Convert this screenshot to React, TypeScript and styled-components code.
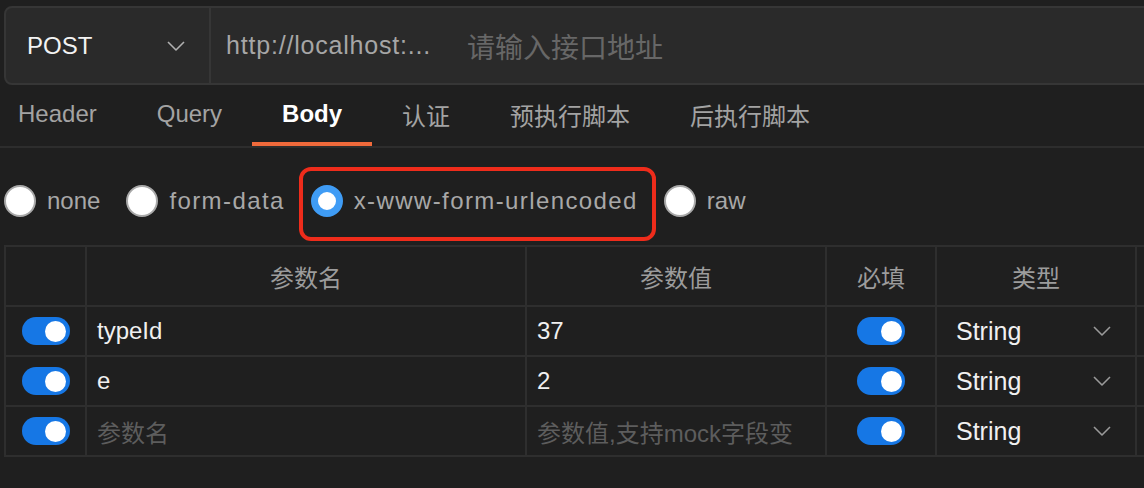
import { Fragment } from "react";
import styled, { createGlobalStyle } from "styled-components";

const GlobalStyle = createGlobalStyle`
  html, body {
    margin: 0;
    padding: 0;
    background: #1f1f1f;
  }
  body {
    font-family: "Liberation Sans", "Noto Sans CJK SC", sans-serif;
    overflow: hidden;
  }
`;

const Page = styled.div`
  width: 1144px;
  height: 488px;
  overflow: hidden;
  background: #1f1f1f;
`;

const UrlBar = styled.div`
  display: flex;
  align-items: stretch;
  height: 79px;
  margin: 6px -40px 0 4px;
  box-sizing: border-box;
  background: #2a2a2a;
  border: 2px solid #363636;
  border-radius: 8px;
`;

const MethodSelect = styled.div`
  display: flex;
  align-items: center;
  justify-content: space-between;
  width: 205px;
  box-sizing: border-box;
  padding: 0 24px 0 21px;
  border-right: 2px solid #363636;
  font-size: 24px;
  color: #f2f2f2;
`;

const UrlField = styled.div`
  display: flex;
  align-items: center;
  padding-left: 15px;
`;

const UrlText = styled.span`
  font-size: 25px;
  letter-spacing: 0.8px;
  color: #a6a6a6;
`;

const UrlPlaceholder = styled.span`
  margin-left: 36px;
  font-size: 28px;
  color: #676767;
`;

const TabBar = styled.div`
  display: flex;
  height: 63px;
  margin-left: -12px;
  box-sizing: border-box;
  border-bottom: 2px solid #2d2d2d;
`;

const Tab = styled.div<{ $active?: boolean }>`
  position: relative;
  display: flex;
  align-items: center;
  padding: 0 30px 3px;
  font-size: 24px;
  font-weight: ${(p) => (p.$active ? 700 : 400)};
  color: ${(p) => (p.$active ? "#ffffff" : "#a3a3a3")};

  &::after {
    content: "";
    display: ${(p) => (p.$active ? "block" : "none")};
    position: absolute;
    left: 0;
    right: 0;
    bottom: 0;
    height: 4px;
    background: #f06a3b;
  }
`;

const RadioRow = styled.div`
  display: flex;
  align-items: center;
  gap: 26px;
  height: 97px;
  box-sizing: border-box;
  padding: 8px 0 0 4px;
`;

const RadioItem = styled.label<{ $marked?: boolean }>`
  position: relative;
  display: flex;
  align-items: center;
  gap: 11px;

  &::after {
    content: "";
    display: ${(p) => (p.$marked ? "block" : "none")};
    position: absolute;
    top: -18px;
    bottom: -24px;
    left: -12px;
    right: -18px;
    border: 4px solid #ee2c1b;
    border-radius: 12px;
  }
`;

const RadioDot = styled.span<{ $checked?: boolean }>`
  width: 32px;
  height: 32px;
  box-sizing: border-box;
  border-radius: 50%;
  background: #ffffff;
  border: ${(p) => (p.$checked ? "7px solid #3f9cf5" : "2px solid #a9a9a9")};
`;

const RadioLabel = styled.span<{ $spacing?: number }>`
  font-size: 24px;
  color: #a8a8a8;
  letter-spacing: ${(p) => p.$spacing ?? 0}px;
`;

const Table = styled.div`
  display: grid;
  grid-template-columns: 81px 440px 300px 110px 200px 80px;
  grid-template-rows: 60px;
  grid-auto-rows: 50px;
  margin-left: 4px;
  border-left: 2px solid #2e2e2e;
  border-top: 2px solid #2e2e2e;
`;

const Cell = styled.div<{ $center?: boolean; $head?: boolean }>`
  display: flex;
  align-items: center;
  justify-content: ${(p) => (p.$center ? "center" : "flex-start")};
  min-width: 0;
  box-sizing: border-box;
  padding: ${(p) => (p.$center ? "0" : "0 10px")};
  border-right: 2px solid #2e2e2e;
  border-bottom: 2px solid #2e2e2e;
  font-size: 24px;
  color: ${(p) => (p.$head ? "#9c9c9c" : "#f0f0f0")};
  white-space: nowrap;
`;

const CellText = styled.span<{ $hint?: boolean }>`
  color: ${(p) => (p.$hint ? "#5d5d5d" : "inherit")};
`;

const TypeSelect = styled(Cell)`
  justify-content: space-between;
  padding: 0 24px 0 19px;
  font-size: 25px;
`;

const Toggle = styled.span`
  display: flex;
  align-items: center;
  justify-content: flex-end;
  width: 48px;
  height: 28px;
  box-sizing: border-box;
  padding-right: 3.5px;
  border-radius: 14px;
  background: #1677e5;
`;

const Knob = styled.span`
  width: 21px;
  height: 21px;
  border-radius: 50%;
  background: #ffffff;
`;

function Chevron({ color = "#a0a0a0" }: { color?: string }) {
  return (
    <svg width="18" height="10" viewBox="0 0 18 10" fill="none">
      <polyline points="1,1 9,9 17,1" stroke={color} strokeWidth="1.6" strokeLinejoin="round" />
    </svg>
  );
}

function Switch() {
  return (
    <Toggle>
      <Knob />
    </Toggle>
  );
}

const tabs = ["Header", "Query", "Body", "认证", "预执行脚本", "后执行脚本"];

const bodyTypes = [
  { label: "none", spacing: 0 },
  { label: "form-data", spacing: 1.4 },
  { label: "x-www-form-urlencoded", spacing: 1.4, checked: true },
  { label: "raw", spacing: 0 },
];

const params = [
  { name: "typeId", value: "37" },
  { name: "e", value: "2" },
  { name: "", value: "" },
];

export default function App() {
  return (
    <Page>
      <GlobalStyle />
      <UrlBar>
        <MethodSelect>
          POST
          <Chevron color="#b0b0b0" />
        </MethodSelect>
        <UrlField>
          <UrlText>http://localhost:...</UrlText>
          <UrlPlaceholder>请输入接口地址</UrlPlaceholder>
        </UrlField>
      </UrlBar>

      <TabBar>
        {tabs.map((t) => (
          <Tab key={t} $active={t === "Body"}>
            {t}
          </Tab>
        ))}
      </TabBar>

      <RadioRow>
        {bodyTypes.map((b) => (
          <RadioItem key={b.label} $marked={b.checked}>
            <RadioDot $checked={b.checked} />
            <RadioLabel $spacing={b.spacing}>{b.label}</RadioLabel>
          </RadioItem>
        ))}
      </RadioRow>

      <Table>
        <Cell $head $center />
        <Cell $head $center>参数名</Cell>
        <Cell $head $center>参数值</Cell>
        <Cell $head $center>必填</Cell>
        <Cell $head $center>类型</Cell>
        <Cell $head $center />

        {params.map((p, i) => (
          <Fragment key={i}>
            <Cell $center>
              <Switch />
            </Cell>
            <Cell>
              <CellText $hint={!p.name}>{p.name || "参数名"}</CellText>
            </Cell>
            <Cell>
              <CellText $hint={!p.value}>{p.value || "参数值,支持mock字段变"}</CellText>
            </Cell>
            <Cell $center>
              <Switch />
            </Cell>
            <TypeSelect>
              String
              <Chevron color="#9a9a9a" />
            </TypeSelect>
            <Cell />
          </Fragment>
        ))}
      </Table>
    </Page>
  );
}
